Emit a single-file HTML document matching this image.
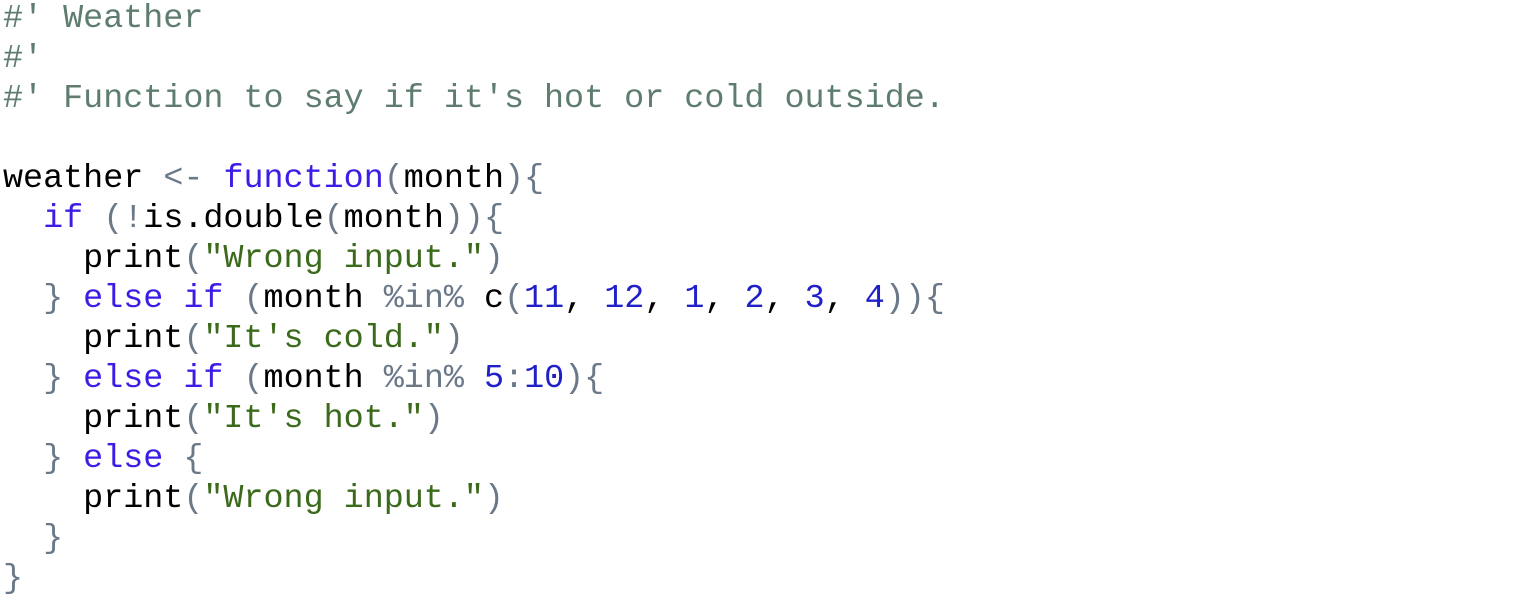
<!DOCTYPE html><html><head><style>
body{margin:0;background:#fff;width:1515px;height:606px;overflow:hidden}
pre{margin:0;position:absolute;left:3px;top:-1px;font-family:"Liberation Mono",monospace;font-size:33.4px;line-height:40px;color:#000}
.c{color:#5e7d6e}.k{color:#3b1ee6}.p{color:#6a7888}.s{color:#3c6a1c}.n{color:#2020c8}
</style></head><body><pre><span class="c">#' Weather
#'
#' Function to say if it's hot or cold outside.</span>

weather <span class="p">&lt;-</span> <span class="k">function</span><span class="p">(</span>month<span class="p">){</span>
  <span class="k">if</span> <span class="p">(!</span>is.double<span class="p">(</span>month<span class="p">)){</span>
    print<span class="p">(</span><span class="s">"Wrong input."</span><span class="p">)</span>
  <span class="p">}</span> <span class="k">else if</span> <span class="p">(</span>month <span class="p">%in%</span> c<span class="p">(</span><span class="n">11</span>, <span class="n">12</span>, <span class="n">1</span>, <span class="n">2</span>, <span class="n">3</span>, <span class="n">4</span><span class="p">)){</span>
    print<span class="p">(</span><span class="s">"It's cold."</span><span class="p">)</span>
  <span class="p">}</span> <span class="k">else if</span> <span class="p">(</span>month <span class="p">%in%</span> <span class="n">5</span><span class="p">:</span><span class="n">10</span><span class="p">){</span>
    print<span class="p">(</span><span class="s">"It's hot."</span><span class="p">)</span>
  <span class="p">}</span> <span class="k">else</span> <span class="p">{</span>
    print<span class="p">(</span><span class="s">"Wrong input."</span><span class="p">)</span>
  <span class="p">}</span>
<span class="p">}</span></pre></body></html>
